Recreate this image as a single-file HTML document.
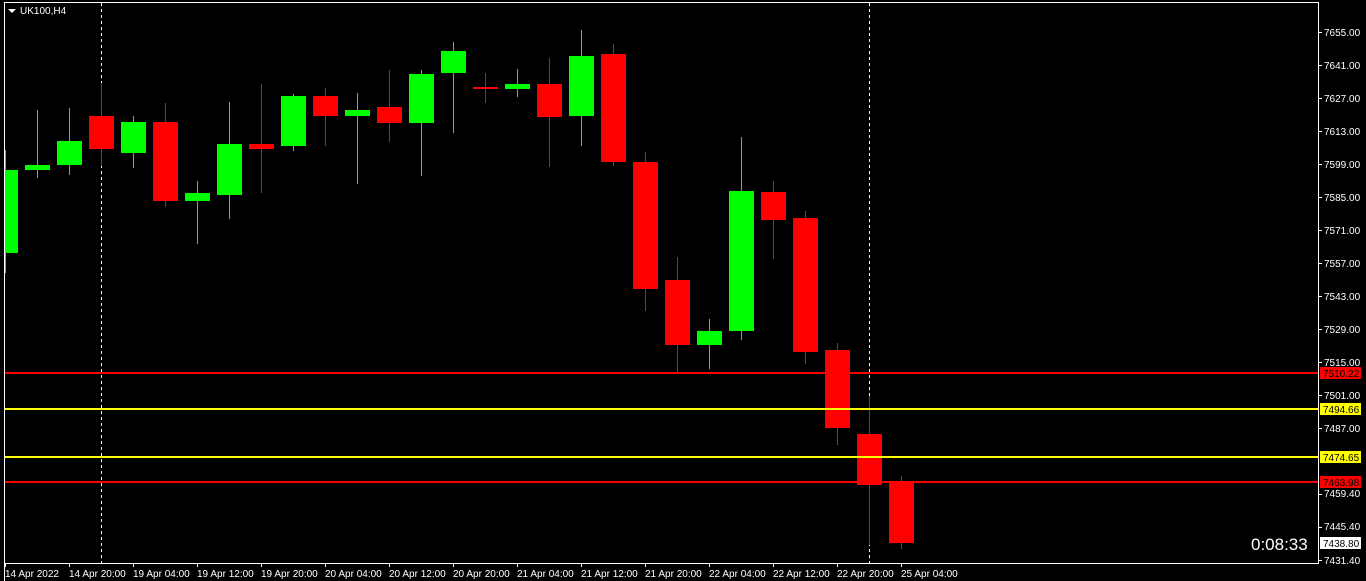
<!DOCTYPE html>
<html><head><meta charset="utf-8"><style>
html,body{margin:0;padding:0;background:#000;width:1366px;height:581px;overflow:hidden}
svg{display:block}
text{font-family:"Liberation Sans",sans-serif;font-size:10px;fill:#fff}
</style></head><body>
<svg width="1366" height="581" viewBox="0 0 1366 581" xmlns="http://www.w3.org/2000/svg">
<rect width="1366" height="581" fill="#000"/>
<!-- frame -->
<path d="M4.5 581 V2.5 H1318.5 V563.5 H4.5" fill="none" stroke="#fff" stroke-width="1"/>
<!-- dashed period separators -->
<line x1="101.5" y1="3" x2="101.5" y2="563" stroke="#fff" stroke-dasharray="3,3"/>
<line x1="869.5" y1="3" x2="869.5" y2="563" stroke="#fff" stroke-dasharray="3,3"/>
<!-- header -->
<polygon points="8,9 16,9 12,13" fill="#fff"/>
<text x="20" y="14" style="font-size:10px">UK100,H4</text>
<g id="candles">
<!-- wicks + bodies -->
<line x1="5.5" y1="150" x2="5.5" y2="273" stroke="#0f0"/><rect x="5" y="170" width="13" height="83" fill="#0f0"/>
<line x1="37.5" y1="110" x2="37.5" y2="178" stroke="#0f0"/><rect x="25" y="165" width="25" height="5" fill="#0f0"/>
<line x1="69.5" y1="108" x2="69.5" y2="175" stroke="#0f0"/><rect x="57" y="141" width="25" height="24" fill="#0f0"/>
<line x1="101.5" y1="83" x2="101.5" y2="166" stroke="#f00"/><rect x="89" y="116" width="25" height="33" fill="#f00"/>
<line x1="133.5" y1="116" x2="133.5" y2="168" stroke="#0f0"/><rect x="121" y="122" width="25" height="31" fill="#0f0"/>
<line x1="165.5" y1="103" x2="165.5" y2="207" stroke="#f00"/><rect x="153" y="122" width="25" height="79" fill="#f00"/>
<line x1="197.5" y1="181" x2="197.5" y2="244" stroke="#0f0"/><rect x="185" y="193" width="25" height="8" fill="#0f0"/>
<line x1="229.5" y1="102" x2="229.5" y2="219" stroke="#0f0"/><rect x="217" y="144" width="25" height="51" fill="#0f0"/>
<line x1="261.5" y1="84" x2="261.5" y2="193" stroke="#f00"/><rect x="249" y="144" width="25" height="5" fill="#f00"/>
<line x1="293.5" y1="94" x2="293.5" y2="151" stroke="#0f0"/><rect x="281" y="96" width="25" height="50" fill="#0f0"/>
<line x1="325.5" y1="88" x2="325.5" y2="146" stroke="#f00"/><rect x="313" y="96" width="25" height="20" fill="#f00"/>
<line x1="357.5" y1="93" x2="357.5" y2="184" stroke="#0f0"/><rect x="345" y="110" width="25" height="6" fill="#0f0"/>
<line x1="389.5" y1="70" x2="389.5" y2="142" stroke="#f00"/><rect x="377" y="107" width="25" height="16" fill="#f00"/>
<line x1="421.5" y1="70" x2="421.5" y2="176" stroke="#0f0"/><rect x="409" y="74" width="25" height="49" fill="#0f0"/>
<line x1="453.5" y1="42" x2="453.5" y2="133" stroke="#0f0"/><rect x="441" y="51" width="25" height="22" fill="#0f0"/>
<line x1="485.5" y1="73" x2="485.5" y2="103" stroke="#f00"/><rect x="473" y="87" width="25" height="2" fill="#f00"/>
<line x1="517.5" y1="69" x2="517.5" y2="97" stroke="#0f0"/><rect x="505" y="84" width="25" height="5" fill="#0f0"/>
<line x1="549.5" y1="58" x2="549.5" y2="167" stroke="#f00"/><rect x="537" y="84" width="25" height="33" fill="#f00"/>
<line x1="581.5" y1="30" x2="581.5" y2="146" stroke="#0f0"/><rect x="569" y="56" width="25" height="60" fill="#0f0"/>
<line x1="613.5" y1="44" x2="613.5" y2="166" stroke="#f00"/><rect x="601" y="54" width="25" height="108" fill="#f00"/>
<line x1="645.5" y1="152" x2="645.5" y2="311" stroke="#f00"/><rect x="633" y="162" width="25" height="127" fill="#f00"/>
<line x1="677.5" y1="257" x2="677.5" y2="373" stroke="#f00"/><rect x="665" y="280" width="25" height="65" fill="#f00"/>
<line x1="709.5" y1="319" x2="709.5" y2="369" stroke="#0f0"/><rect x="697" y="331" width="25" height="14" fill="#0f0"/>
<line x1="741.5" y1="137" x2="741.5" y2="340" stroke="#0f0"/><rect x="729" y="191" width="25" height="140" fill="#0f0"/>
<line x1="773.5" y1="181" x2="773.5" y2="259" stroke="#f00"/><rect x="761" y="192" width="25" height="28" fill="#f00"/>
<line x1="805.5" y1="211" x2="805.5" y2="364" stroke="#f00"/><rect x="793" y="218" width="25" height="134" fill="#f00"/>
<line x1="837.5" y1="343" x2="837.5" y2="445" stroke="#f00"/><rect x="825" y="350" width="25" height="78" fill="#f00"/>
<line x1="869.5" y1="396" x2="869.5" y2="545" stroke="#f00"/><rect x="857" y="434" width="25" height="51" fill="#f00"/>
<line x1="901.5" y1="476" x2="901.5" y2="549" stroke="#f00"/><rect x="889" y="481" width="25" height="62" fill="#f00"/>
</g>
<!-- horizontal levels -->
<rect x="5" y="372" width="1313" height="2" fill="#f00"/>
<rect x="5" y="408" width="1313" height="2" fill="#ff0"/>
<rect x="5" y="456" width="1313" height="2" fill="#ff0"/>
<rect x="5" y="481" width="1313" height="2" fill="#f00"/>
<!-- price axis -->
<g stroke="#fff">
<line x1="1319" y1="32.5" x2="1322" y2="32.5"/><line x1="1319" y1="65.5" x2="1322" y2="65.5"/>
<line x1="1319" y1="98.5" x2="1322" y2="98.5"/><line x1="1319" y1="131.5" x2="1322" y2="131.5"/>
<line x1="1319" y1="164.5" x2="1322" y2="164.5"/><line x1="1319" y1="197.5" x2="1322" y2="197.5"/>
<line x1="1319" y1="230.5" x2="1322" y2="230.5"/><line x1="1319" y1="263.5" x2="1322" y2="263.5"/>
<line x1="1319" y1="296.5" x2="1322" y2="296.5"/><line x1="1319" y1="329.5" x2="1322" y2="329.5"/>
<line x1="1319" y1="362.5" x2="1322" y2="362.5"/><line x1="1319" y1="395.5" x2="1322" y2="395.5"/>
<line x1="1319" y1="428.5" x2="1322" y2="428.5"/><line x1="1319" y1="494.5" x2="1322" y2="494.5"/>
<line x1="1319" y1="527.5" x2="1322" y2="527.5"/><line x1="1319" y1="560.5" x2="1322" y2="560.5"/>
</g>
<g>
<text x="1324" y="36">7655.00</text><text x="1324" y="69">7641.00</text>
<text x="1324" y="102">7627.00</text><text x="1324" y="135">7613.00</text>
<text x="1324" y="168">7599.00</text><text x="1324" y="201">7585.00</text>
<text x="1324" y="234">7571.00</text><text x="1324" y="267">7557.00</text>
<text x="1324" y="300">7543.00</text><text x="1324" y="333">7529.00</text>
<text x="1324" y="366">7515.00</text><text x="1324" y="399">7501.00</text>
<text x="1324" y="432">7487.00</text><text x="1324" y="497">7459.40</text>
<text x="1324" y="530">7445.40</text><text x="1324" y="564">7431.40</text>
</g>
<!-- level tags -->
<rect x="1320" y="367" width="41" height="12" fill="#f00"/><text x="1323" y="377" style="fill:#000">7510.22</text>
<rect x="1320" y="403" width="41" height="12" fill="#ff0"/><text x="1323" y="413" style="fill:#000">7494.66</text>
<rect x="1320" y="451" width="41" height="12" fill="#ff0"/><text x="1323" y="461" style="fill:#000">7474.65</text>
<rect x="1320" y="476" width="41" height="12" fill="#f00"/><text x="1323" y="486" style="fill:#000">7463.98</text>
<rect x="1320" y="537" width="41" height="12" fill="#fff"/><text x="1323" y="547" style="fill:#000">7438.80</text>
<!-- timer -->
<text x="1251" y="550" style="font-size:17px;fill:#fff">0:08:33</text>
<!-- time axis -->
<g stroke="#fff">
<line x1="5.5" y1="563" x2="5.5" y2="567"/><line x1="69.5" y1="563" x2="69.5" y2="567"/>
<line x1="133.5" y1="563" x2="133.5" y2="567"/><line x1="197.5" y1="563" x2="197.5" y2="567"/>
<line x1="261.5" y1="563" x2="261.5" y2="567"/><line x1="325.5" y1="563" x2="325.5" y2="567"/>
<line x1="389.5" y1="563" x2="389.5" y2="567"/><line x1="453.5" y1="563" x2="453.5" y2="567"/>
<line x1="517.5" y1="563" x2="517.5" y2="567"/><line x1="581.5" y1="563" x2="581.5" y2="567"/>
<line x1="645.5" y1="563" x2="645.5" y2="567"/><line x1="709.5" y1="563" x2="709.5" y2="567"/>
<line x1="773.5" y1="563" x2="773.5" y2="567"/><line x1="837.5" y1="563" x2="837.5" y2="567"/>
<line x1="901.5" y1="563" x2="901.5" y2="567"/>
</g>
<g>
<text x="5" y="577">14 Apr 2022</text><text x="69" y="577">14 Apr 20:00</text>
<text x="133" y="577">19 Apr 04:00</text><text x="197" y="577">19 Apr 12:00</text>
<text x="261" y="577">19 Apr 20:00</text><text x="325" y="577">20 Apr 04:00</text>
<text x="389" y="577">20 Apr 12:00</text><text x="453" y="577">20 Apr 20:00</text>
<text x="517" y="577">21 Apr 04:00</text><text x="581" y="577">21 Apr 12:00</text>
<text x="645" y="577">21 Apr 20:00</text><text x="709" y="577">22 Apr 04:00</text>
<text x="773" y="577">22 Apr 12:00</text><text x="837" y="577">22 Apr 20:00</text>
<text x="901" y="577">25 Apr 04:00</text>
</g>
</svg>
</body></html>
